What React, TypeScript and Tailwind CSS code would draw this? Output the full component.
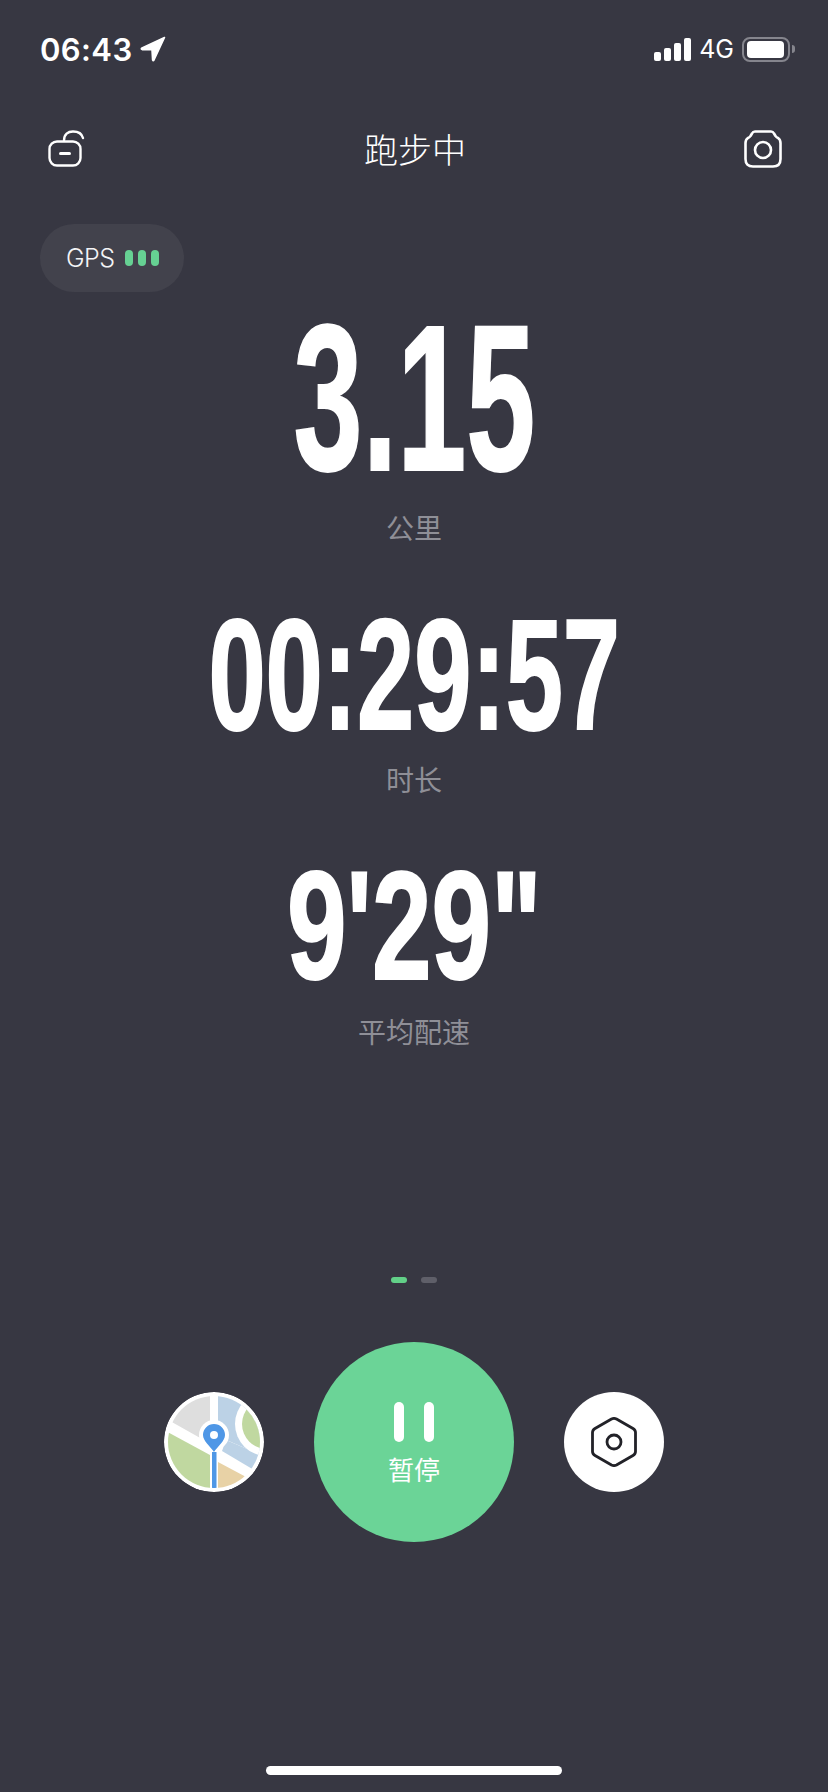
const sans = { fontFamily: 'Inter, "Noto Sans CJK SC", sans-serif' };

const StatusBar = () => (
  <div className="flex h-[98px] items-center justify-between pl-10 pr-[33px] text-white">
    <div className="flex items-center gap-[7px]">
      <span className="text-[31px] leading-none font-semibold tracking-[0.4px]">06:43</span>
      <svg width="26" height="26" viewBox="0 0 26 26" fill="white">
        <path d="M24.5 1.5 L2 12 Q0.5 13 2.2 13.6 L12 13.8 L12.6 24 Q13.2 25.4 14 24 Z" stroke="white" strokeWidth="1.6" strokeLinejoin="round" />
      </svg>
    </div>
    <div className="flex items-center">
      <div className="flex h-[23px] items-end gap-[3px]">
        <div className="h-[9px] w-[7px] rounded-[2px] bg-white" />
        <div className="h-[13px] w-[7px] rounded-[2px] bg-white" />
        <div className="h-[18px] w-[7px] rounded-[2px] bg-white" />
        <div className="h-[23px] w-[7px] rounded-[2px] bg-white" />
      </div>
      <span className="ml-[8px] text-[25px] leading-none">4G</span>
      <div className="ml-[8px] flex h-[25px] w-[48px] items-center rounded-[8px] border-2 border-[#85858d] pl-[3px]">
        <div className="h-[17px] w-[37px] rounded-[4px] bg-white" />
      </div>
      <div className="ml-[2px] h-[8px] w-[3px] rounded-r-full bg-[#85858d]" />
    </div>
  </div>
);

const LockIcon = () => (
  <svg width="38" height="38" viewBox="0 0 38 38" fill="none" stroke="white" strokeWidth="2.4" strokeLinecap="round">
    <rect x="1.5" y="11.5" width="31" height="24" rx="7.5" />
    <path d="M16 10.5 C16 4 20 1.5 25 1.5 C30 1.5 34 4 35 8" />
    <path d="M12.5 23.5 H21.5" strokeWidth="3" />
  </svg>
);

const CameraIcon = () => (
  <svg width="38" height="38" viewBox="0 0 38 38" fill="none" stroke="white" strokeWidth="2.6">
    <path d="M11 1.5 H27 Q29 1.5 30 3.5 L31.5 6 Q32 7 34 8 Q36.5 9.5 36.5 13 V29 Q36.5 36.5 29 36.5 H9 Q1.5 36.5 1.5 29 V13 Q1.5 9.5 4 8 Q6 7 6.5 6 L8 3.5 Q9 1.5 11 1.5 Z" strokeLinejoin="round" />
    <circle cx="19" cy="20" r="8" />
  </svg>
);

const Stat = ({ value, label, size, box }: { value: string; label: string; size: string; box: string }) => (
  <div className="flex flex-col items-center">
    <div className={`flex items-center justify-center text-white ${box}`}>
      <span
        className={`inline-block whitespace-nowrap font-bold [-webkit-text-stroke:2px_white] ${size}`}
        style={{ fontFamily: '"Liberation Sans", sans-serif' }}
      >
        {value}
      </span>
    </div>
    <div className="flex h-12 items-center pt-[2px] text-[28px] text-[#8f8f97]">{label}</div>
  </div>
);

const MapButton = () => (
  <svg width="100" height="100" viewBox="0 0 100 100" className="rounded-full">
    <defs>
      <clipPath id="inner">
        <circle cx="50" cy="50" r="46" />
      </clipPath>
    </defs>
    <circle cx="50" cy="50" r="50" fill="white" />
    <g clipPath="url(#inner)">
      <path d="M0 0 H46 V30 Q37 36 38 47 L6 29 L0 24 Z" fill="#dedede" />
      <path d="M54 0 H100 V66 L95 62 L60 47 Q62 34 54 29 Z" fill="#bcd2e6" />
      <path d="M62 48 L100 64 L90 78 L58 59 Z" fill="#bcd2e6" />
      <path d="M0 38 L46 63 V100 H0 Z" fill="#c0d8a0" />
      <path d="M54 70 L84 86 L60 100 H54 Z" fill="#e8d2a6" />
      <circle cx="103" cy="32" r="32" fill="white" />
      <circle cx="103" cy="32" r="25" fill="#c0d8a0" />
      <rect x="48" y="60" width="4.5" height="40" fill="#4f97e6" />
    </g>
    <circle cx="50" cy="43" r="15" fill="white" />
    <path d="M50 60 C46 54 39 49 39 43 A11 11 0 0 1 61 43 C61 49 54 54 50 60 Z" fill="#4f97e6" />
    <circle cx="50" cy="43" r="4" fill="white" />
  </svg>
);

export default function App() {
  return (
    <div
      className="flex h-[1792px] w-[828px] flex-col overflow-hidden bg-[#373742]"
      style={sans}
    >
      <StatusBar />

      {/* Title row */}
      <div className="flex h-[102px] items-center justify-between pl-[48px] pr-[46px] text-white">
        <LockIcon />
        <span className="pt-1 text-[34px] leading-none font-light">跑步中</span>
        <CameraIcon />
      </div>

      <div className="ml-10 mt-6 flex h-[68px] w-[144px] items-center rounded-full bg-[#42424c] pl-[26px]">
        <span className="text-[25px] leading-none font-light tracking-[-0.5px] text-[#f4f4f6]">GPS</span>
        <div className="ml-[10px] flex gap-[5px]">
          <div className="h-4 w-2 rounded-full bg-[#66d193]" />
          <div className="h-4 w-2 rounded-full bg-[#66d193]" />
          <div className="h-4 w-2 rounded-full bg-[#66d193]" />
        </div>
      </div>

      <div className="flex flex-col gap-10">
        <Stat value="3.15" label="公里" size="text-[207px] leading-none scale-x-[0.6]" box="h-[212px]" />
        <Stat value="00:29:57" label="时长" size="text-[157px] leading-none scale-x-[0.655]" box="h-[164px]" />
        <Stat value={`9'29"`} label="平均配速" size="text-[154px] leading-none scale-x-[0.695]" box="h-[164px]" />
      </div>

      {/* Page dots */}
      <div className="mt-[221px] flex justify-center gap-[14px]">
        <div className="h-[6px] w-4 rounded-full bg-[#62d088]" />
        <div className="h-[6px] w-4 rounded-full bg-[#5f5f69]" />
      </div>

      {/* Controls */}
      <div className="mt-[59px] flex items-center justify-center gap-[50px]">
        <MapButton />
        <div className="flex h-[200px] w-[200px] flex-col items-center rounded-full bg-[#6bd497] pt-[60px]">
          <div className="flex gap-5">
            <div className="h-10 w-[10px] rounded-full bg-white" />
            <div className="h-10 w-[10px] rounded-full bg-white" />
          </div>
          <span className="mt-4 text-[26px] leading-none text-white">暂停</span>
        </div>
        <div className="flex h-[100px] w-[100px] items-center justify-center rounded-full bg-white">
          <svg width="46" height="50" viewBox="0 0 46 50" fill="none" stroke="#222228" strokeWidth="2.8">
            <path d="M20.5 2 Q23 0.8 25.5 2 L42 11.5 Q44.5 13 44.5 15.5 V34.5 Q44.5 37 42 38.5 L25.5 48 Q23 49.2 20.5 48 L4 38.5 Q1.5 37 1.5 34.5 V15.5 Q1.5 13 4 11.5 Z" strokeLinejoin="round" />
            <circle cx="23" cy="25" r="7" />
          </svg>
        </div>
      </div>

      <div className="mx-auto mt-[224px] h-[9px] w-[296px] rounded-full bg-white" />
    </div>
  );
}
